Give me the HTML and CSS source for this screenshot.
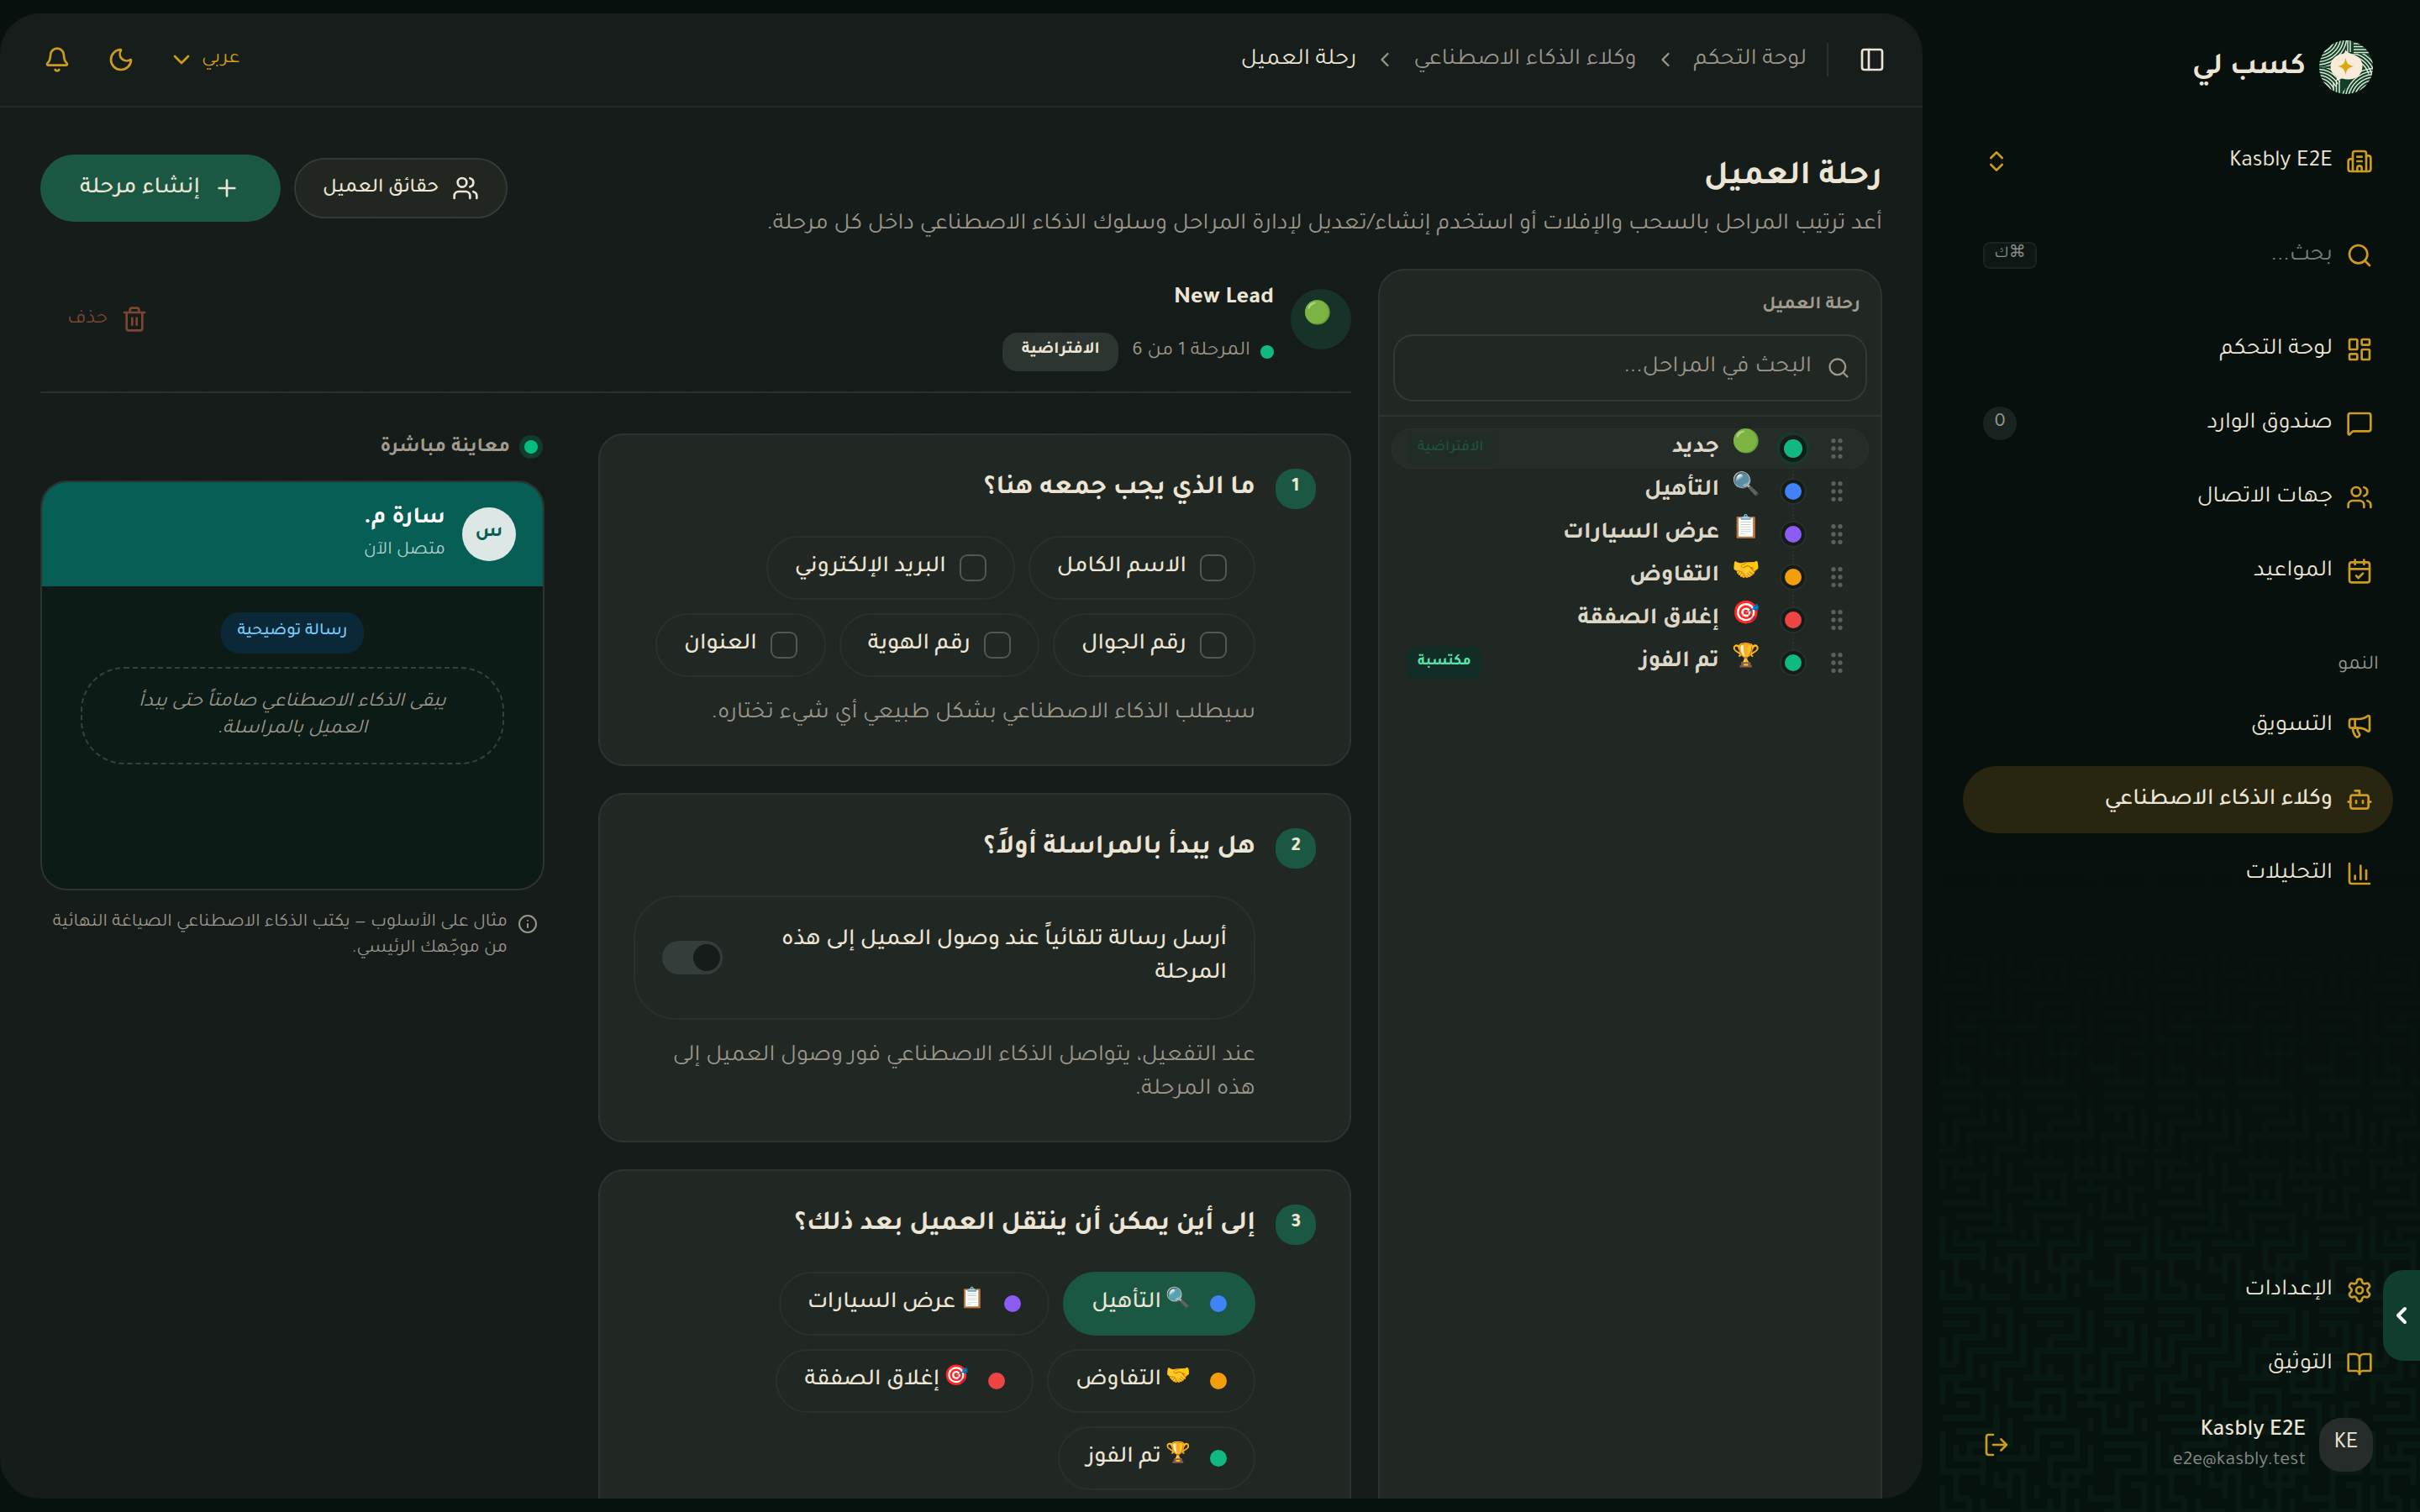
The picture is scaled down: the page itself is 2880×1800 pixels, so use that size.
FILE: index.html
```html
<!DOCTYPE html>
<html lang="ar" dir="rtl">
<head>
<meta charset="utf-8">
<title>رحلة العميل</title>
<link rel="stylesheet" href="styles.css">
</head>
<body>
<svg class="defs" aria-hidden="true">
  <defs>
    <symbol id="search" viewBox="0 0 24 24"><circle cx="11" cy="11" r="8"/><path d="m21 21-4.3-4.3"/></symbol>
    <symbol id="users" viewBox="0 0 24 24"><path d="M16 21v-2a4 4 0 0 0-4-4H6a4 4 0 0 0-4 4v2"/><circle cx="9" cy="7" r="4"/><path d="M22 21v-2a4 4 0 0 0-3-3.87"/><path d="M16 3.13a4 4 0 0 1 0 7.75"/></symbol>
    <symbol id="chev-left" viewBox="0 0 24 24"><path d="m15 18-6-6 6-6"/></symbol>
    <symbol id="grip" viewBox="0 0 24 24"><circle cx="9" cy="12" r="1"/><circle cx="9" cy="5" r="1"/><circle cx="9" cy="19" r="1"/><circle cx="15" cy="12" r="1"/><circle cx="15" cy="5" r="1"/><circle cx="15" cy="19" r="1"/></symbol>
    <pattern id="maze" width="256" height="256" patternUnits="userSpaceOnUse">
      <path d="M8 8H56V40H24V72M72 8H88V56H40V88H8V120M104 8H168V40H136M104 24V72H72V104M184 8V56H120V88H152M200 8H248M200 24H232V56H200V88M248 24V72H216V104H168V72M24 88V104H56V136H8M88 88V120H120V104H152V136H104M168 120H200V152H232V120H248M24 152H72V120M88 136V168H40V184M8 152V200H56V216M72 184H120V152H168V184H136V216M184 168V200H152V248H104V200H88V232M200 168H248V200H216V232H184V216M8 216V248H40V232M56 232V248H88M120 216V232M232 216H248V248H200M168 232V248"/>
      <path d="M8 24H40M8 40V72H24M72 24V40M120 24H152M136 40V56M168 56V72M184 72V88H168M216 40V24M184 104V120M136 72V88M56 72V88M56 104H40M72 136V168M120 120V136M136 120V136M24 168H24V184H56V200M104 168V184M136 168H152M200 184H232M168 200V216H136M24 200V232H40M72 200V216H88M216 120V136M184 136V152M248 88H232V104M248 136V152M24 120H40M200 104V88M104 88H120M216 248V232M136 232V248"/>
    </pattern>
    <pattern id="weave" width="192" height="192" patternUnits="userSpaceOnUse">
      <path d="M0 96 96 0M24 120 120 24M48 144 96 96M96 192 192 96M120 168 168 120M96 48 144 96M0 144 48 192M144 0 192 48M120 24 168 72"/>
    </pattern>
    <linearGradient id="rise" x1="0" y1="0" x2="0" y2="1"><stop offset="0" stop-color="#fff" stop-opacity="0"/><stop offset=".65" stop-color="#fff" stop-opacity=".9"/><stop offset="1" stop-color="#fff"/></linearGradient>
    <mask id="fade"><rect width="576" height="760" fill="url(#rise)"/></mask>
    <clipPath id="disc"><circle cx="32" cy="32" r="32"/></clipPath>
    <clipPath id="q1"><path d="M0 0H36L20 30 0 32Z"/></clipPath>
    <clipPath id="q2"><path d="M38 16H64V46L50 30Z"/></clipPath>
    <clipPath id="q3"><path d="M0 32 20 34 26 48 12 64H0Z"/></clipPath>
    <clipPath id="q4"><path d="M64 32 48 36 26 64H64Z"/></clipPath>
  </defs>
</svg>

<div class="app">
  <aside class="sidebar">
    <svg class="maze" width="576" height="760"><rect width="576" height="760" fill="url(#maze)" mask="url(#fade)"/></svg>
    <div class="brand">
      <svg class="logo" viewBox="0 0 64 64">
        <g clip-path="url(#disc)">
          <rect width="64" height="64" fill="#123f27"/>
          <g fill="none" stroke="#dfe8d8" stroke-width="1.5">
            <g clip-path="url(#q1)"><circle cx="-2" cy="-6" r="14"/><circle cx="-2" cy="-6" r="17.5"/><circle cx="-2" cy="-6" r="21"/><circle cx="-2" cy="-6" r="24.500"/><circle cx="-2" cy="-6" r="28"/><circle cx="-2" cy="-6" r="31.500"/><circle cx="-2" cy="-6" r="35"/><circle cx="-2" cy="-6" r="38.500"/></g>
            <g clip-path="url(#q2)"><circle cx="36" cy="46" r="20"/><circle cx="36" cy="46" r="23.500"/><circle cx="36" cy="46" r="27"/><circle cx="36" cy="46" r="30.500"/><circle cx="36" cy="46" r="34"/></g>
            <g clip-path="url(#q3)"><circle cx="-2" cy="66" r="14"/><circle cx="-2" cy="66" r="17.500"/><circle cx="-2" cy="66" r="21"/><circle cx="-2" cy="66" r="24.500"/><circle cx="-2" cy="66" r="28"/><circle cx="-2" cy="66" r="31.500"/><circle cx="-2" cy="66" r="35"/></g>
            <g clip-path="url(#q4)"><circle cx="66" cy="72" r="14"/><circle cx="66" cy="72" r="17.500"/><circle cx="66" cy="72" r="21"/><circle cx="66" cy="72" r="24.500"/><circle cx="66" cy="72" r="28"/><circle cx="66" cy="72" r="31.500"/><circle cx="66" cy="72" r="35"/><circle cx="66" cy="72" r="38.500"/></g>
            <path d="M34 0V14M37 0V14M41 4H60M41 7.500H60M41 11H62M41 14.500H64M17 50V64M20.500 48V64M24 48V64"/>
          </g>
          <path d="M31 11c2 3 5 4.500 9 5.500 7 2 11.500 7.500 11.500 14.500 0 9-7 15.500-16 15.500-4 0-6-.5-9-1-2 1.500-4.500 2.500-7 2.500 1.500-1.500 2-3 1.500-4.500C16 41 13.500 36 13.500 31 13.500 23 20 17 28 16c2-.5 3-2 3-5Z" fill="#f6ecd9"/>
          <path d="M31.500 21c1.200 6.500 3 8.500 9.500 10-6.500 1.500-8.300 3.500-9.500 10-1.200-6.500-3-8.500-9.500-10 6.500-1.500 8.300-3.500 9.500-10Z" fill="#dca714"/>
        </g>
      </svg>
      <span class="brand-name">كسب لي</span>
    </div>

    <div class="item workspace">
      <svg class="icon" viewBox="0 0 24 24"><path d="M10 12h4M10 8h4M14 21v-3a2 2 0 0 0-4 0v3"/><path d="M6 10H4a2 2 0 0 0-2 2v7a2 2 0 0 0 2 2h16a2 2 0 0 0 2-2V9a2 2 0 0 0-2-2h-2"/><path d="M6 21V5a2 2 0 0 1 2-2h8a2 2 0 0 1 2 2v16"/></svg>
      <span class="label">Kasbly E2E</span>
      <svg class="icon" viewBox="0 0 24 24"><path d="m7 15 5 5 5-5M7 9l5-5 5 5"/></svg>
    </div>
    <div class="item find">
      <svg class="icon"><use href="#search"/></svg>
      <span class="label">بحث...</span>
      <kbd>⌘ك</kbd>
    </div>

    <nav class="nav">
      <div class="item"><svg class="icon" viewBox="0 0 24 24"><rect width="7" height="9" x="3" y="3" rx="1"/><rect width="7" height="5" x="14" y="3" rx="1"/><rect width="7" height="9" x="14" y="12" rx="1"/><rect width="7" height="5" x="3" y="16" rx="1"/></svg><span class="label">لوحة التحكم</span></div>
      <div class="item"><svg class="icon" viewBox="0 0 24 24"><path d="M22 17a2 2 0 0 1-2 2H6.828a2 2 0 0 0-1.414.586l-2.202 2.202A.71.71 0 0 1 2 21.286V5a2 2 0 0 1 2-2h16a2 2 0 0 1 2 2z"/></svg><span class="label">صندوق الوارد</span><span class="count">0</span></div>
      <div class="item"><svg class="icon"><use href="#users"/></svg><span class="label">جهات الاتصال</span></div>
      <div class="item"><svg class="icon" viewBox="0 0 24 24"><path d="M8 2v4M16 2v4"/><rect width="18" height="18" x="3" y="4" rx="2"/><path d="M3 10h18M9 16l2 2 4-4"/></svg><span class="label">المواعيد</span></div>
    </nav>
    <div class="group">النمو</div>
    <nav class="nav">
      <div class="item"><svg class="icon" viewBox="0 0 24 24"><path d="M11 6a13 13 0 0 0 8.400-2.800A1 1 0 0 1 21 4v12a1 1 0 0 1-1.600.8A13 13 0 0 0 11 14H5a2 2 0 0 1-2-2V8a2 2 0 0 1 2-2z"/><path d="M6 14a12 12 0 0 0 2.400 7.200 2 2 0 0 0 3.200-2.400A8 8 0 0 1 10 14M8 6v8"/></svg><span class="label">التسويق</span></div>
      <div class="item active"><svg class="icon" viewBox="0 0 24 24"><path d="M12 8V4H8"/><rect width="16" height="12" x="4" y="8" rx="2"/><path d="M2 14h2M20 14h2M15 13v2M9 13v2"/></svg><span class="label">وكلاء الذكاء الاصطناعي</span></div>
      <div class="item"><svg class="icon" viewBox="0 0 24 24"><path d="M3 3v16a2 2 0 0 0 2 2h16M18 17V9M13 17V5M8 17v-3"/></svg><span class="label">التحليلات</span></div>
    </nav>
    <div class="bottom">
      <div class="item"><svg class="icon" viewBox="0 0 24 24"><path d="M9.671 4.136a2.340 2.340 0 0 1 4.659 0 2.340 2.340 0 0 0 3.319 1.915 2.340 2.340 0 0 1 2.330 4.033 2.340 2.340 0 0 0 0 3.831 2.340 2.340 0 0 1-2.330 4.033 2.340 2.340 0 0 0-3.319 1.915 2.340 2.340 0 0 1-4.659 0 2.340 2.340 0 0 0-3.320-1.915 2.340 2.340 0 0 1-2.330-4.033 2.340 2.340 0 0 0 0-3.831A2.340 2.340 0 0 1 6.350 6.051a2.340 2.340 0 0 0 3.319-1.915"/><circle cx="12" cy="12" r="3"/></svg><span class="label">الإعدادات</span></div>
      <div class="item"><svg class="icon" viewBox="0 0 24 24"><path d="M12 7v14"/><path d="M3 18a1 1 0 0 1-1-1V4a1 1 0 0 1 1-1h5a4 4 0 0 1 4 4 4 4 0 0 1 4-4h5a1 1 0 0 1 1 1v13a1 1 0 0 1-1 1h-6a3 3 0 0 0-3 3 3 3 0 0 0-3-3z"/></svg><span class="label">التوثيق</span></div>
      <div class="user">
        <span class="initials">KE</span>
        <span class="who"><b>Kasbly E2E</b><small>e2e@kasbly.test</small></span>
        <svg class="icon" viewBox="0 0 24 24"><path d="m16 17 5-5-5-5M21 12H9M9 21H5a2 2 0 0 1-2-2V5a2 2 0 0 1 2-2h4"/></svg>
      </div>
    </div>
  </aside>

  <main class="panel">
    <svg class="weave" width="2288" height="1656"><rect width="2288" height="1656" fill="url(#weave)"/></svg>
    <header class="topbar">
      <svg class="icon cream" viewBox="0 0 24 24"><rect width="18" height="18" x="3" y="3" rx="2"/><path d="M9 3v18"/></svg>
      <i class="sep"></i>
      <span class="crumb">لوحة التحكم</span>
      <svg class="icon sm"><use href="#chev-left"/></svg>
      <span class="crumb">وكلاء الذكاء الاصطناعي</span>
      <svg class="icon sm"><use href="#chev-left"/></svg>
      <span class="crumb here">رحلة العميل</span>
      <span class="lang">عربي <svg class="icon" viewBox="0 0 24 24"><path d="m6 9 6 6 6-6"/></svg></span>
      <svg class="icon gold moon" viewBox="0 0 24 24"><path d="M20.985 12.486a9 9 0 1 1-9.473-9.472c.405-.022.617.46.402.803a6 6 0 0 0 8.268 8.268c.344-.215.825-.004.803.401"/></svg>
      <svg class="icon gold bell" viewBox="0 0 24 24"><path d="M10.268 21a2 2 0 0 0 3.464 0"/><path d="M3.262 15.326A1 1 0 0 0 4 17h16a1 1 0 0 0 .74-1.673C19.410 13.956 18 12.499 18 8A6 6 0 0 0 6 8c0 4.499-1.411 5.956-2.738 7.326"/></svg>
    </header>

    <section class="head">
      <div class="titles">
        <h1>رحلة العميل</h1>
        <p>أعد ترتيب المراحل بالسحب والإفلات أو استخدم إنشاء/تعديل لإدارة المراحل وسلوك الذكاء الاصطناعي داخل كل مرحلة.</p>
      </div>
      <div class="actions">
        <button class="btn facts"><svg class="icon"><use href="#users"/></svg><span>حقائق العميل</span></button>
        <button class="btn create"><svg class="icon" viewBox="0 0 24 24"><path d="M5 12h14M12 5v14"/></svg><span>إنشاء مرحلة</span></button>
      </div>
    </section>

    <div class="columns">
      <section class="stages">
        <div class="stages-top">
          <h2>رحلة العميل</h2>
          <div class="field"><svg class="icon sm"><use href="#search"/></svg><span>البحث في المراحل...</span></div>
        </div>
        <ul class="list">
          <li class="row on"><svg class="icon grip"><use href="#grip"/></svg><i class="dot green"></i><span class="emo">🟢</span><span class="name">جديد</span><span class="tag dim">الافتراضية</span></li>
          <li class="row"><svg class="icon grip"><use href="#grip"/></svg><i class="dot blue"></i><span class="emo">🔍</span><span class="name">التأهيل</span></li>
          <li class="row"><svg class="icon grip"><use href="#grip"/></svg><i class="dot violet"></i><span class="emo">📋</span><span class="name">عرض السيارات</span></li>
          <li class="row"><svg class="icon grip"><use href="#grip"/></svg><i class="dot amber"></i><span class="emo">🤝</span><span class="name">التفاوض</span></li>
          <li class="row"><svg class="icon grip"><use href="#grip"/></svg><i class="dot red"></i><span class="emo">🎯</span><span class="name">إغلاق الصفقة</span></li>
          <li class="row"><svg class="icon grip"><use href="#grip"/></svg><i class="dot green"></i><span class="emo">🏆</span><span class="name">تم الفوز</span><span class="tag">مكتسبة</span></li>
        </ul>
      </section>

      <section class="detail">
        <div class="lead">
          <span class="face"><span>🟢</span></span>
          <div class="lead-text">
            <b>New Lead</b>
            <div class="meta"><i class="pip green"></i><span>المرحلة 1 من 6</span><span class="default">الافتراضية</span></div>
          </div>
          <span class="delete"><svg class="icon" viewBox="0 0 24 24"><path d="M10 11v6M14 11v6M19 6v14a2 2 0 0 1-2 2H7a2 2 0 0 1-2-2V6M3 6h18M8 6V4a2 2 0 0 1 2-2h4a2 2 0 0 1 2 2v2"/></svg><span>حذف</span></span>
        </div>

        <div class="split">
          <div class="cards">
            <article class="card">
              <span class="num">1</span>
              <div class="body">
                <h3>ما الذي يجب جمعه هنا؟</h3>
                <div class="chips">
                  <label class="chip"><i class="box"></i>الاسم الكامل</label>
                  <label class="chip"><i class="box"></i>البريد الإلكتروني</label>
                  <label class="chip"><i class="box"></i>رقم الجوال</label>
                  <label class="chip"><i class="box"></i>رقم الهوية</label>
                  <label class="chip"><i class="box"></i>العنوان</label>
                </div>
                <p class="help">سيطلب الذكاء الاصطناعي بشكل طبيعي أي شيء تختاره.</p>
              </div>
            </article>
            <article class="card">
              <span class="num">2</span>
              <div class="body">
                <h3>هل يبدأ بالمراسلة أولاً؟</h3>
                <div class="auto"><span>أرسل رسالة تلقائياً عند وصول العميل إلى هذه المرحلة</span><i class="switch"></i></div>
                <p class="help">عند التفعيل، يتواصل الذكاء الاصطناعي فور وصول العميل إلى هذه المرحلة.</p>
              </div>
            </article>
            <article class="card">
              <span class="num">3</span>
              <div class="body">
                <h3>إلى أين يمكن أن ينتقل العميل بعد ذلك؟</h3>
                <div class="chips next">
                  <span class="chip picked"><i class="pip blue"></i><span class="emo">🔍</span>التأهيل</span>
                  <span class="chip"><i class="pip violet"></i><span class="emo">📋</span>عرض السيارات</span>
                  <span class="chip"><i class="pip amber"></i><span class="emo">🤝</span>التفاوض</span>
                  <span class="chip"><i class="pip red"></i><span class="emo">🎯</span>إغلاق الصفقة</span>
                  <span class="chip"><i class="pip green"></i><span class="emo">🏆</span>تم الفوز</span>
                </div>
              </div>
            </article>
          </div>

          <aside class="preview">
            <div class="live"><i class="pulse"></i><span>معاينة مباشرة</span></div>
            <div class="phone">
              <div class="contact">
                <span class="avatar">س</span>
                <div><b>سارة م.</b><small>متصل الآن</small></div>
              </div>
              <div class="chat">
                <span class="sample">رسالة توضيحية</span>
                <p class="silent">يبقى الذكاء الاصطناعي صامتاً حتى يبدأ العميل بالمراسلة.</p>
              </div>
            </div>
            <div class="note"><svg class="icon" viewBox="0 0 24 24"><circle cx="12" cy="12" r="10"/><path d="M12 16v-4M12 8h.01"/></svg><p>مثال على الأسلوب — يكتب الذكاء الاصطناعي الصياغة النهائية من موجّهك الرئيسي.</p></div>
          </aside>
        </div>
      </section>
    </div>
  </main>

  <button class="drawer"><svg class="icon" viewBox="0 0 24 24"><path d="m15 18-6-6 6-6"/></svg></button>
</div>
</body>
</html>
```
FILE: styles.css
```css
:root {
  --cream: #ece5d5;
  --muted: #9b968a;
  --gold: #cd9c1e;
  --green: #1a5843;
  --line: #2d3330;
  --card: #212723;
}
* { box-sizing: border-box; margin: 0; padding: 0; }
body {
  width: 2880px; height: 1800px; overflow: hidden;
  background: linear-gradient(#08100d, #08100d 55%, #06120e);
  color: var(--cream);
  font: 400 28px/40px Tajawal, "Noto Sans Arabic", "Noto Sans", sans-serif;
}
button { font: inherit; color: inherit; border: 0; }
ul { list-style: none; }
.defs { position: absolute; width: 0; height: 0; }
.icon { width: 32px; height: 32px; flex: none; fill: none; stroke: currentColor; stroke-width: 2; stroke-linecap: round; stroke-linejoin: round; }
.icon.sm { width: 28px; height: 28px; }
.app { position: relative; display: flex; height: 1800px; }
.green { background: #10b981; }
.blue { background: #3f83f7; }
.violet { background: #8b5cf6; }
.amber { background: #f59e0b; }
.red { background: #ef4444; }

/* Sidebar */
.sidebar { position: relative; flex: none; width: 592px; padding: 48px 32px; display: flex; flex-direction: column; }
.maze { position: absolute; right: 0; bottom: 0; z-index: -1; }
#maze path { fill: none; stroke: #091a14; stroke-width: 7; }
.sidebar .icon { color: var(--gold); }
.brand { display: flex; align-items: center; gap: 16px; height: 64px; padding: 0 24px; margin-bottom: 40px; }
.logo { width: 64px; height: 64px; flex: none; }
.brand-name { padding-top: 3px; font-size: 36px; font-weight: 700; line-height: 56px; }
.item { display: flex; align-items: center; gap: 16px; width: 512px; height: 80px; padding: 0 24px; border-radius: 40px; }
.item .label { flex: 1; padding-top: 1px; white-space: nowrap; }
.workspace { margin-bottom: 32px; }
.find { margin-bottom: 32px; color: #7b7e77; }
kbd { width: 64px; height: 32px; border: 2px solid #1b2421; border-radius: 8px; background: #0e1714; font: 400 20px/26px Tajawal, "DejaVu Sans", sans-serif; text-align: center; color: #8b8d85; }
.nav { display: flex; flex-direction: column; gap: 8px; }
.count { width: 40px; height: 40px; border-radius: 20px; background: #19231f; color: #96978e; font-size: 24px; line-height: 40px; text-align: center; }
.active { background: #282511; font-weight: 500; }
.group { margin: 48px 0 8px; padding: 0 17px; height: 48px; font-size: 24px; line-height: 50px; color: #94958c; }
.bottom { margin-top: auto; display: flex; flex-direction: column; gap: 8px; }
.user { display: flex; align-items: center; gap: 16px; width: 512px; padding: 16px 24px 0; height: 80px; }
.initials { width: 64px; height: 64px; border-radius: 26px; background: #252c29; text-align: center; line-height: 62px; }
.who { flex: 1; display: flex; flex-direction: column; padding-top: 3px; }
.who b { font-weight: 500; line-height: 36px; }
.who small { font-size: 24px; line-height: 36px; color: #848982; }

/* Main panel */
.panel { position: relative; width: 2288px; height: 1768px; margin-top: 16px; border-radius: 48px; background: #161c19; overflow: hidden; display: flex; flex-direction: column; }
.weave { position: absolute; left: 0; top: 112px; pointer-events: none; }
#weave path { fill: none; stroke: #151b18; stroke-width: 9; }
.panel > :not(.weave) { position: relative; }
.topbar { flex: none; display: flex; align-items: center; height: 112px; padding: 0 44px; border-bottom: 2px solid #232a27; background: #171d1a; }
.cream { color: var(--cream); }
.gold { color: var(--gold); }
.sep { width: 2px; height: 40px; margin: 0 36px 0 35px; background: #2a302d; }
.topbar .sm { color: var(--muted); margin: 0 20px; }
.crumb { padding-top: 2px; color: var(--muted); white-space: nowrap; }
.sep + .crumb { margin-right: -11px; }
.crumb.here { color: var(--cream); }
.lang { display: flex; align-items: center; gap: 8px; margin-right: auto; font-size: 24px; color: var(--gold); }
.moon { margin-right: 40px; }
.bell { margin: 0 44px 0 8px; }
.head { flex: none; display: flex; justify-content: space-between; padding: 56px 48px 32px; height: 192px; }
h1 { font-size: 40px; line-height: 56px; margin-bottom: 8px; }
.titles p { color: var(--muted); white-space: nowrap; }
.actions { display: flex; align-items: center; gap: 16px; height: 80px; }
.btn { display: flex; align-items: center; gap: 16px; white-space: nowrap; }
.btn span { padding-top: 2px; }
.facts { width: 254px; height: 72px; padding: 0 32px; border: 2px solid #343a36; border-radius: 36px; background: #212621; font-size: 24px; font-weight: 500; }
.create { width: 286px; height: 80px; padding: 0 48px; border-radius: 40px; background: var(--green); font-size: 28px; font-weight: 500; }

.columns { display: flex; gap: 32px; padding: 0 48px; flex: 1; }
.stages { width: 600px; flex: none; border: 2px solid var(--line); border-radius: 32px 32px 0 0; border-bottom: 0; background: var(--card); }
.stages-top { height: 174px; padding: 24px 16px 0; border-bottom: 2px solid var(--line); }
h2 { padding: 0 8px; font-size: 22px; line-height: 36px; color: #a09b8e; }
.field { display: flex; align-items: center; gap: 18px; height: 80px; margin-top: 16px; padding: 0 18px; border: 2px solid #333a36; border-radius: 24px; color: var(--muted); }
.list { position: relative; padding: 14px; display: flex; flex-direction: column; gap: 3px; }
.list::before { content: ""; position: absolute; right: 103px; top: 40px; height: 250px; border-right: 2px dotted #2b312e; }
.row { position: relative; display: flex; align-items: center; height: 48px; padding: 0 22px 0 19px; border-radius: 24px; white-space: nowrap; }
.row.on { background: #262d29; box-shadow: inset 0 0 0 1px #2b322e; }
.row .grip { color: #5d605a; }
.dot { width: 20px; height: 20px; margin: 0 26px 0 30px; border-radius: 50%; flex: none; box-shadow: 0 0 0 4px #151c18, 0 0 0 6px #29302c; }
.on .dot { width: 22px; height: 22px; margin: 0 25px 0 29px; box-shadow: 0 0 0 5px #151c18, 0 0 0 9px #19382c; }
.row .emo { width: 32px; margin: 0 0 6px 16px; font-size: 27px; line-height: 32px; display: flex; justify-content: center; }
.name { flex: 1; padding-bottom: 1px; font-weight: 700; color: #ddd7c8; }
.row .tag { height: 38px; padding: 0 12px; border-radius: 8px; background: #122d25; color: #58e2ac; font-size: 18px; font-weight: 700; line-height: 36px; }
.row .dim { background: #212c27; color: #1f5442; font-weight: 500; }

.detail { flex: 1; min-width: 0; }
.lead { display: flex; align-items: flex-start; height: 148px; padding-top: 16px; border-bottom: 2px solid #2a302d; }
.face { display: flex; align-items: center; justify-content: center; width: 72px; height: 72px; margin: 8px 0 0 20px; border-radius: 50%; background: #173229; font-size: 27px; line-height: 32px; }
.face span { margin: 0 8px 4px 0; }
.lead-text b { display: block; line-height: 40px; font-size: 28px; }
.meta { display: flex; align-items: center; gap: 12px; height: 46px; margin-top: 20px; font-size: 24px; color: var(--muted); }
.pip { width: 16px; height: 16px; border-radius: 50%; flex: none; }
.default { width: 138px; height: 46px; margin-right: 4px; border-radius: 18px; background: #2c3530; color: var(--cream); font-size: 20px; font-weight: 700; line-height: 43px; text-align: center; }
.delete { display: flex; align-items: center; gap: 16px; margin: 24px auto 0 32px; height: 40px; font-size: 24px; color: #7c4630; }
.delete span { padding-top: 1px; }

.split { display: flex; gap: 64px; padding-top: 48px; }
.cards { width: 896px; flex: none; display: flex; flex-direction: column; gap: 32px; }
.card { display: flex; align-items: flex-start; gap: 24px; padding: 40px; border: 2px solid var(--line); border-radius: 30px; background: var(--card); }
.num { width: 48px; height: 48px; flex: none; border-radius: 22px; background: var(--green); font-size: 24px; font-weight: 700; line-height: 47px; text-align: center; }
.body { flex: 1; }
h3 { height: 48px; margin-bottom: 32px; font-size: 32px; line-height: 48px; white-space: nowrap; }
.chips { display: flex; flex-wrap: wrap; gap: 16px; }
.chip { display: flex; align-items: center; gap: 16px; height: 76px; padding: 0 32px; border: 2px solid #2a302d; border-radius: 38px; font-weight: 500; white-space: nowrap; }
.box { width: 32px; height: 32px; border: 2px solid #525751; border-radius: 9px; }
.next .chip { gap: 0; }
.next .pip { width: 20px; height: 20px; margin-left: 24px; }
.next .emo { width: 28px; margin: 0 0 4px 6px; font-size: 24px; display: flex; justify-content: center; }
.picked { background: var(--green); border-color: var(--green); }
.help { margin-top: 24px; color: var(--muted); }
.auto { display: flex; align-items: center; justify-content: space-between; gap: 32px; height: 148px; padding: 0 32px; border: 2px solid #2a302d; border-radius: 50px; font-weight: 500; }
.auto span { width: 560px; }
.switch { width: 72px; height: 40px; padding: 4px 3px; border-radius: 20px; background: #343d39; }
.switch::before { content: ""; display: block; width: 32px; height: 32px; border-radius: 50%; background: #161c19; }

.preview { width: 600px; }
.live { display: flex; align-items: center; gap: 17px; height: 32px; padding-right: 8px; font-size: 24px; font-weight: 700; color: #a19c8f; margin-bottom: 24px; }
.live span { padding-top: 3px; }
.pulse { width: 16px; height: 16px; border-radius: 50%; background: #06bd7d; box-shadow: 0 0 0 6px #113d2e; }
.phone { height: 488px; border: 2px solid var(--line); border-radius: 32px; background: #0d1b17; overflow: hidden; }
.contact { display: flex; gap: 20px; height: 124px; padding: 30px 32px; background: #075e54; }
.avatar { width: 64px; height: 64px; border-radius: 50%; background: #dde8e6; color: #075e54; font-size: 24px; font-weight: 700; line-height: 62px; text-align: center; }
.contact b { display: block; margin-top: -6px; color: #fff; }
.contact small { display: block; font-size: 22px; line-height: 36px; color: #b4d0cc; }
.chat { display: flex; flex-direction: column; align-items: center; gap: 16px; padding-top: 31px; }
.sample { width: 170px; height: 49px; border-radius: 22px; background: #0a2838; color: #74ccf8; font-size: 20.5px; font-weight: 500; line-height: 47px; text-align: center; white-space: nowrap; }
.silent { width: 504px; height: 116px; padding: 25px 48px 20px; border: 2px dashed #37423e; border-radius: 52px; font-size: 24px; font-style: italic; line-height: 32px; text-align: center; color: var(--muted); }
.note { display: flex; gap: 12px; margin-top: 22px; padding: 0 8px 0 0; color: var(--muted); }
.note .icon { width: 24px; height: 24px; margin-top: 6px; }
.note p { width: 550px; font-size: 22px; line-height: 31px; padding-top: 2px; }

/* Side drawer handle */
.drawer { position: absolute; right: 0; top: 1512px; display: flex; align-items: center; justify-content: center; width: 44px; height: 108px; border-top-left-radius: 24px; border-bottom-left-radius: 24px; background: #113d2e; color: #fff; }
.drawer .icon { stroke-width: 3; }
```
